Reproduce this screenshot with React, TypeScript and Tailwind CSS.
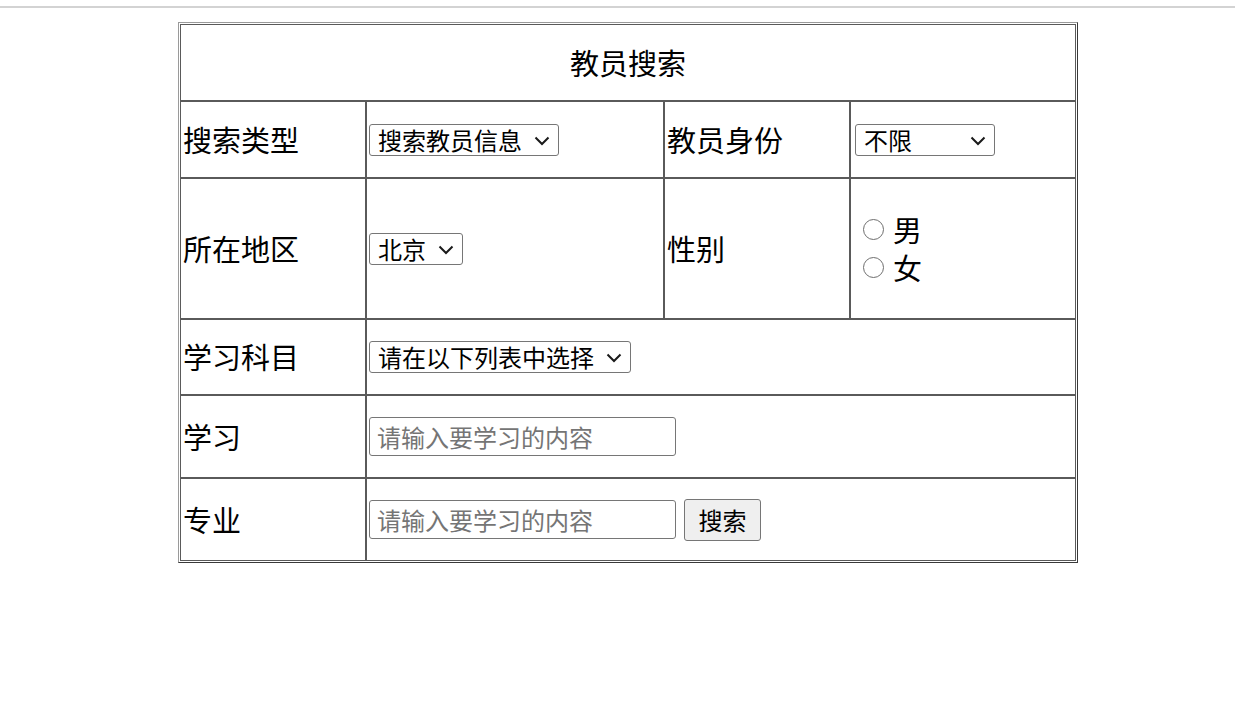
import React from 'react';

const cell = 'p-[1px] border border-[#5a5a5a] text-[29px] leading-[1.3]';
const label = `${cell} pl-[2px]`;

function Select({
  options,
  className = '',
  width = '',
}: {
  options: string[];
  className?: string;
  width?: string;
}) {
  return (
    <div className={`relative inline-flex ${className}`}>
      <select
        className={`h-[32px] appearance-none rounded-[3px] border border-[#767676] bg-white pl-[8px] pr-[36px] text-[24px] leading-[28px] ${width}`}
      >
        {options.map((o) => (
          <option key={o}>{o}</option>
        ))}
      </select>
      <svg
        className="pointer-events-none absolute right-[9px] top-[12px]"
        width="16"
        height="10"
        viewBox="0 0 16 10"
        fill="none"
        stroke="#1a1a1a"
        strokeWidth="2"
      >
        <path d="M1.5 1.5 L8 8 L14.5 1.5" />
      </svg>
    </div>
  );
}

function Radio({ text }: { text: string }) {
  return (
    <label className="flex h-[38px] items-center">
      <input
        type="radio"
        name="sex"
        className="ml-[11px] mr-[9px] h-[21px] w-[21px] appearance-none rounded-full border-[1.5px] border-[#6e6e6e] bg-white"
      />
      <span className="leading-none">{text}</span>
    </label>
  );
}

export default function App() {
  return (
    <div className="min-h-screen bg-white text-black font-['Noto_Sans_CJK_SC',sans-serif]">
      <div className="h-[2px] mt-[6px] bg-[#d3d3d3]" />

      <table className="ml-[178px] mt-[14px] w-[900px] table-fixed border-separate border-spacing-0 p-[1px] border border-t-[#9a9a9a] border-l-[#9a9a9a] border-r-[#3a3a3a] border-b-[#3a3a3a]">
        <colgroup>
          <col className="w-[186px]" />
          <col className="w-[298px]" />
          <col className="w-[186px]" />
          <col className="w-[226px]" />
        </colgroup>
        <tbody>
          <tr>
            <td colSpan={4} className={`${cell} h-[77px] text-center`}>
              教员搜索
            </td>
          </tr>

          <tr>
            <td className={`${label} h-[77px]`}>搜索类型</td>
            <td className={cell}>
              <div className="flex items-center">
                <Select className="ml-[1px]" options={['搜索教员信息', '搜索学员信息']} />
              </div>
            </td>
            <td className={label}>教员身份</td>
            <td className={cell}>
              <div className="flex items-center">
                <Select className="ml-[3px]" width="w-[140px]" options={['不限', '在校学生', '专职教师']} />
              </div>
            </td>
          </tr>

          <tr>
            <td className={`${label} h-[141px]`}>所在地区</td>
            <td className={cell}>
              <div className="flex items-center">
                <Select className="ml-[1px]" options={['北京', '上海', '广州']} />
              </div>
            </td>
            <td className={label}>性别</td>
            <td className={cell}>
              <div className="flex flex-col">
                <Radio text="男" />
                <Radio text="女" />
              </div>
            </td>
          </tr>

          <tr>
            <td className={`${label} h-[76px]`}>学习科目</td>
            <td colSpan={3} className={cell}>
              <div className="flex items-center">
                <Select className="ml-[1px]" options={['请在以下列表中选择', '语文', '数学', '英语']} />
              </div>
            </td>
          </tr>

          <tr>
            <td className={`${label} h-[83px]`}>学习</td>
            <td colSpan={3} className={cell}>
              <div className="flex items-center">
                <input
                  type="text"
                  placeholder="请输入要学习的内容"
                  className="ml-[1px] h-[39px] w-[307px] rounded-[3px] border border-[#767676] px-[7px] text-[24px] placeholder:text-[#757575]"
                />
              </div>
            </td>
          </tr>

          <tr>
            <td className={`${label} h-[83px]`}>专业</td>
            <td colSpan={3} className={cell}>
              <div className="flex items-center">
                <input
                  type="text"
                  placeholder="请输入要学习的内容"
                  className="ml-[1px] h-[39px] w-[307px] rounded-[3px] border border-[#767676] px-[7px] text-[24px] placeholder:text-[#757575]"
                />
                <button className="ml-[8px] h-[42px] w-[77px] rounded-[3px] border border-[#767676] bg-[#efefef] text-[24px]">
                  搜索
                </button>
              </div>
            </td>
          </tr>
        </tbody>
      </table>
    </div>
  );
}
